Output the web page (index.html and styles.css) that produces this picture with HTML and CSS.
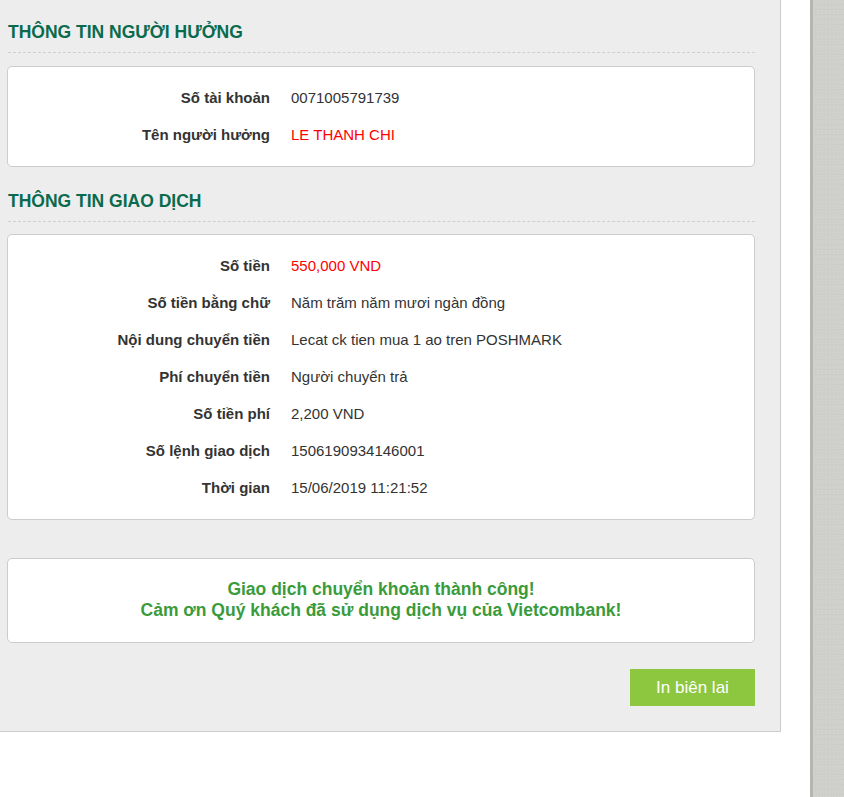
FILE: index.html
```html
<!DOCTYPE html>
<html lang="vi">
<head>
<meta charset="utf-8">
<title>Vietcombank - Giao dịch</title>
<link rel="stylesheet" href="styles.css">
</head>
<body>
<div class="page">
  <div class="panel">
    <h2 class="section-title">THÔNG TIN NGƯỜI HƯỞNG</h2>
    <div class="card">
      <div class="row"><div class="label">Số tài khoản</div><div class="value">0071005791739</div></div>
      <div class="row"><div class="label">Tên người hưởng</div><div class="value red">LE THANH CHI</div></div>
    </div>

    <h2 class="section-title second">THÔNG TIN GIAO DỊCH</h2>
    <div class="card tight">
      <div class="row"><div class="label">Số tiền</div><div class="value red">550,000 VND</div></div>
      <div class="row"><div class="label">Số tiền bằng chữ</div><div class="value">Năm trăm năm mươi ngàn đồng</div></div>
      <div class="row"><div class="label">Nội dung chuyển tiền</div><div class="value">Lecat ck tien mua 1 ao tren POSHMARK</div></div>
      <div class="row"><div class="label">Phí chuyển tiền</div><div class="value">Người chuyển trả</div></div>
      <div class="row"><div class="label">Số tiền phí</div><div class="value">2,200 VND</div></div>
      <div class="row"><div class="label">Số lệnh giao dịch</div><div class="value">1506190934146001</div></div>
      <div class="row"><div class="label">Thời gian</div><div class="value">15/06/2019 11:21:52</div></div>
    </div>

    <div class="card message">
      <p>Giao dịch chuyển khoản thành công!</p>
      <p>Cảm ơn Quý khách đã sử dụng dịch vụ của Vietcombank!</p>
    </div>

    <div class="actions">
      <button class="btn" type="button">In biên lai</button>
    </div>
  </div>
  <div class="gap"></div>
  <div class="side"></div>
</div>
</body>
</html>
```

FILE: styles.css
```css
html, body {
  margin: 0;
  padding: 0;
  background: #ffffff;
  font-family: "Liberation Sans", Arial, sans-serif;
  color: #333333;
}

.page {
  display: flex;
  align-items: flex-start;
  min-height: 797px;
}

.panel {
  width: 748px;
  flex: none;
  background: #ededed;
  border-right: 1px solid #cccccc;
  border-bottom: 1px solid #cccccc;
  padding: 22px 25px 25px 7px;
}

.section-title {
  margin: 0 0 0 1px;
  padding: 0 0 10px;
  font-size: 17.5px;
  line-height: 20px;
  font-weight: bold;
  color: #0a6a4d;
  border-bottom: 1px dashed #cfcfcf;
}

.section-title.second {
  margin-top: 24px;
}

.card {
  margin-top: 13px;
  background: #ffffff;
  border: 1px solid #cccccc;
  border-radius: 5px;
  padding: 12px 0 13px;
}

.card.tight {
  margin-top: 12px;
}

.row {
  display: flex;
  align-items: center;
  height: 37px;
}

.label {
  width: 262px;
  flex: none;
  text-align: right;
  font-weight: bold;
  font-size: 15px;
  color: #333333;
}

.value {
  margin-left: 21px;
  font-size: 15px;
  color: #333333;
}

.value.red {
  color: #ff0000;
}

.card.message {
  margin-top: 38px;
  padding: 20px 0 21px;
  text-align: center;
}

.card.message p {
  margin: 0;
  font-size: 17.5px;
  line-height: 21px;
  font-weight: bold;
  color: #3a9b3a;
}

.actions {
  display: flex;
  justify-content: flex-end;
  margin-top: 26px;
}

.btn {
  width: 125px;
  height: 37px;
  border: none;
  border-radius: 0;
  background: #8dc63f;
  color: #ffffff;
  font-family: "Liberation Sans", Arial, sans-serif;
  font-size: 17px;
  padding: 0;
  cursor: pointer;
}

.gap {
  width: 29px;
  flex: none;
}

.side {
  flex: 1;
  align-self: stretch;
  min-height: 797px;
  border-left: 3px solid #b5b6b3;
  background-color: #cfd0cc;
  background-image:
    radial-gradient(rgba(255,255,255,0.08) 0.6px, transparent 0.8px),
    radial-gradient(rgba(0,0,0,0.03) 0.6px, transparent 0.8px);
  background-size: 3px 3px, 4px 5px;
  background-position: 0 0, 1px 2px;
}
```
